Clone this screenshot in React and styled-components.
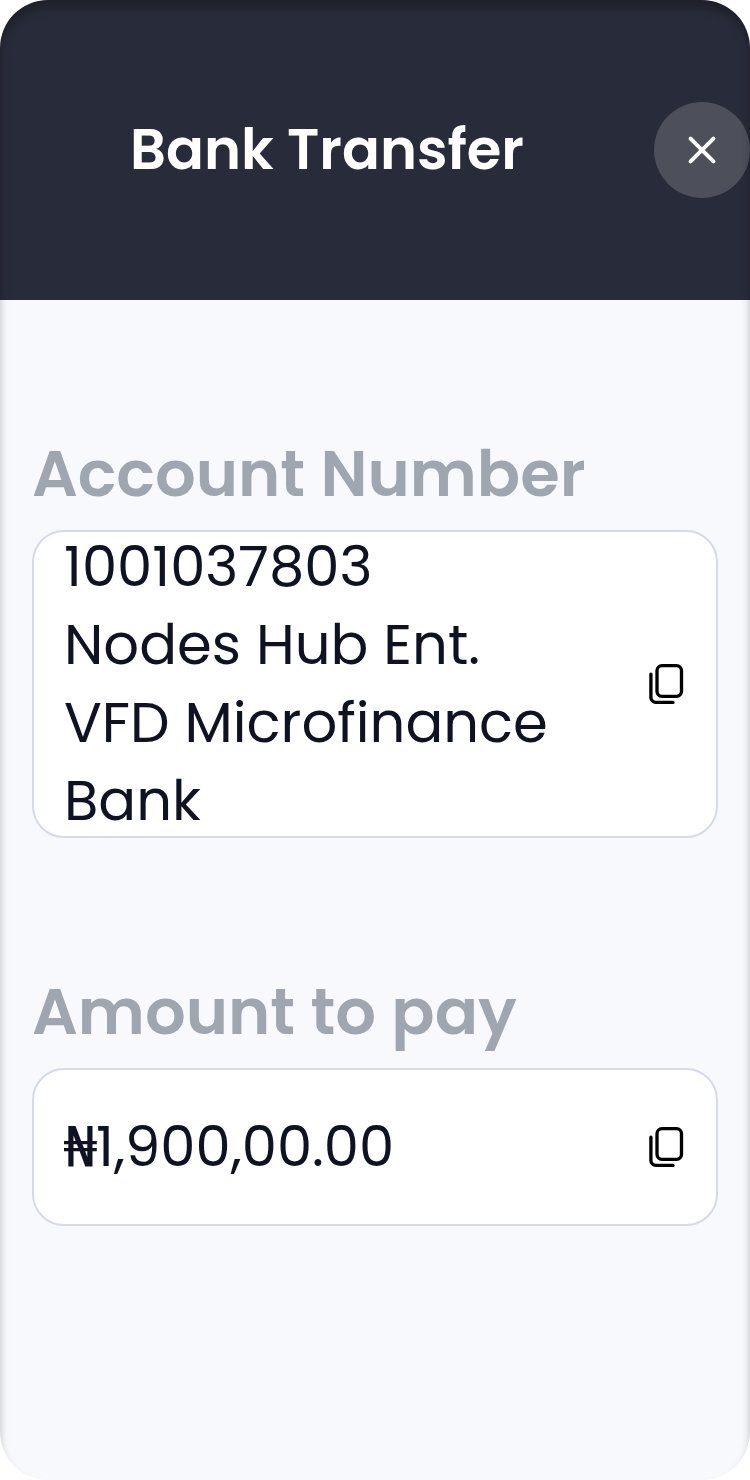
import React from "react";
import styled, { createGlobalStyle } from "styled-components";

const Global = createGlobalStyle`
  * { box-sizing: border-box; }
  body { margin: 0; background: #fff; font-family: "Poppins", "Open Sans", sans-serif; }
`;

const Screen = styled.main`
  position: relative;
  width: 750px;
  height: 1480px;
  overflow: hidden;
  border-radius: 48px;
  background: #f8f9fd;
  &::after {
    content: "";
    position: absolute;
    inset: 0;
    border-radius: inherit;
    pointer-events: none;
    box-shadow: inset 0 8px 8px rgba(0, 0, 0, 0.25);
  }
`;

const Header = styled.header`
  height: 300px;
  display: flex;
  align-items: center;
  justify-content: flex-end;
  gap: 131px;
  background: #282b39;
`;

const Title = styled.h1`
  margin: 0;
  width: 393px;
  font-size: 56px;
  line-height: 84px;
  font-weight: 600;
  white-space: nowrap;
  color: #fff;
`;

const CloseButton = styled.button`
  width: 96px;
  height: 96px;
  padding: 0;
  border: 0;
  border-radius: 50%;
  display: grid;
  place-items: center;
  background: #4d505b;
`;

const Content = styled.div`
  padding: 138px 32px 0;
  display: flex;
  flex-direction: column;
  gap: 138px;
`;

const Label = styled.h2`
  margin: 0 0 20px;
  font-size: 64px;
  line-height: 72px;
  font-weight: 600;
  white-space: nowrap;
  color: #9fa6b0;
`;

const Card = styled.div`
  height: ${(p) => p.$height}px;
  padding: 0 31px 0 30px;
  display: flex;
  align-items: center;
  justify-content: space-between;
  border: 2px solid #d6d9ec;
  border-radius: 32px;
  background: #fff;
`;

const Value = styled.div`
  font-size: 56px;
  line-height: 78px;
  white-space: nowrap;
  color: #0f1222;
`;

const Line = styled.div`
  height: 78px;
`;

const Currency = styled.span`
  font-family: "DejaVu Sans Mono", monospace;
  font-size: 54.5px;
  line-height: 0;
  margin-right: -0.8px;
`;

const CopyIcon = () => (
  <svg width="40" height="44" viewBox="0 0 40 44" fill="none" stroke="#000" strokeWidth="3.33" strokeLinecap="round">
    <rect x="12" y="3.7" width="24.5" height="30.6" rx="5" />
    <path d="M5.9 12.1v23.3a5 5 0 0 0 5 5H28" />
  </svg>
);

export default function App() {
  return (
    <>
      <Global />
      <Screen>
        <Header>
          <Title>Bank Transfer</Title>
          <CloseButton aria-label="Close">
            <svg width="32" height="32" viewBox="0 0 32 32" stroke="#fff" strokeWidth="4" strokeLinecap="round">
              <path d="M4.6 4.6l22.8 22.8M27.4 4.6L4.6 27.4" />
            </svg>
          </CloseButton>
        </Header>
        <Content>
          <section>
            <Label>Account Number</Label>
            <Card $height={308}>
              <Value>
                <Line>1001037803</Line>
                <Line>Nodes Hub Ent.</Line>
                <Line>VFD Microfinance</Line>
                <Line>Bank</Line>
              </Value>
              <CopyIcon />
            </Card>
          </section>
          <section>
            <Label>Amount to pay</Label>
            <Card $height={158}>
              <Value>
                <Line><Currency>₦</Currency>1,900,00.00</Line>
              </Value>
              <CopyIcon />
            </Card>
          </section>
        </Content>
      </Screen>
    </>
  );
}
